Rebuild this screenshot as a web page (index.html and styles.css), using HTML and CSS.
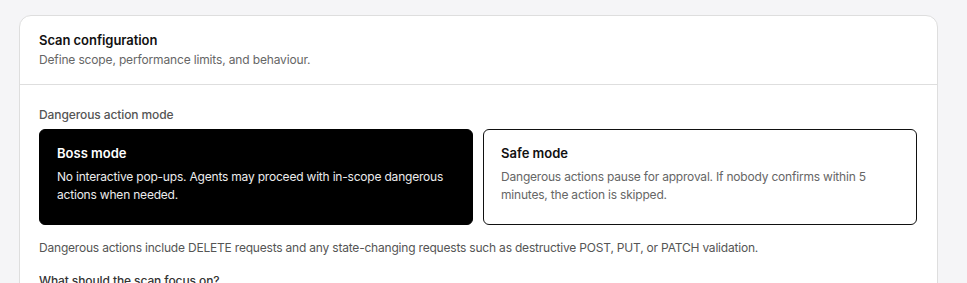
FILE: index.html
```html
<!DOCTYPE html>
<html lang="en">
<head>
<meta charset="utf-8">
<title>Scan configuration</title>
<link rel="stylesheet" href="styles.css">
</head>
<body>
<div class="page">
  <section class="panel">
    <header class="panel-head">
      <h2 class="panel-title">Scan configuration</h2>
      <p class="panel-sub">Define scope, performance limits, and behaviour.</p>
    </header>
    <div class="panel-body">
      <div class="field-label">Dangerous action mode</div>
      <div class="modes">
        <div class="mode mode-active">
          <div class="mode-title">Boss mode</div>
          <div class="mode-desc">No interactive pop-ups. Agents may proceed with in-scope dangerous actions when needed.</div>
        </div>
        <div class="mode">
          <div class="mode-title">Safe mode</div>
          <div class="mode-desc">Dangerous actions pause for approval. If nobody confirms within 5 minutes, the action is skipped.</div>
        </div>
      </div>
      <p class="note">Dangerous actions include DELETE requests and any state-changing requests such as destructive POST, PUT, or PATCH validation.</p>
      <div class="field-label focus">What should the scan focus on?</div>
    </div>
  </section>
</div>
</body>
</html>
```
FILE: styles.css
```css
html, body {
  margin: 0;
  padding: 0;
  background: #f5f5f7;
  font-family: Inter, "Noto Sans", sans-serif;
  color: #111;
  overflow: hidden;
}
.page {
  padding: 15px 29px 0 19px;
}
.panel {
  background: #fff;
  border: 1px solid #dedede;
  border-radius: 12px;
  height: 400px;
}
.panel-head {
  padding: 14px 19px 15px 19px;
  border-bottom: 1px solid #dedede;
}
.panel-title {
  margin: 0;
  font-size: 13px;
  line-height: 20px;
  font-weight: 600;
  letter-spacing: -0.05px;
}
.panel-sub {
  margin: 1px 0 0;
  font-size: 12px;
  line-height: 18px;
  color: #666;
  letter-spacing: -0.15px;
}
.panel-body {
  padding: 22px 20px 0 19px;
}
.field-label {
  font-size: 12px;
  line-height: 16px;
  font-weight: 500;
  color: #555;
  margin-bottom: 6px;
  letter-spacing: -0.1px;
}
.modes {
  display: grid;
  grid-template-columns: 1fr 1fr;
  gap: 10px;
}
.mode {
  border: 1px solid #111;
  border-radius: 6px;
  padding: 14px 17px 20px 17px;
  background: #fff;
}
.mode-title {
  font-size: 13px;
  line-height: 18px;
  font-weight: 600;
  color: #111;
  margin-bottom: 6px;
}
.mode-desc {
  font-size: 12px;
  line-height: 18px;
  color: #666;
  letter-spacing: -0.2px;
}
.mode-active {
  background: #000;
  border-color: #000;
}
.mode-active .mode-title {
  color: #fff;
}
.mode-active .mode-desc {
  color: #ececec;
}
.note {
  margin: 15px 0 0;
  font-size: 12px;
  line-height: 16px;
  color: #555;
  letter-spacing: -0.2px;
}
.focus {
  margin-top: 17px;
  color: #333;
}
```
